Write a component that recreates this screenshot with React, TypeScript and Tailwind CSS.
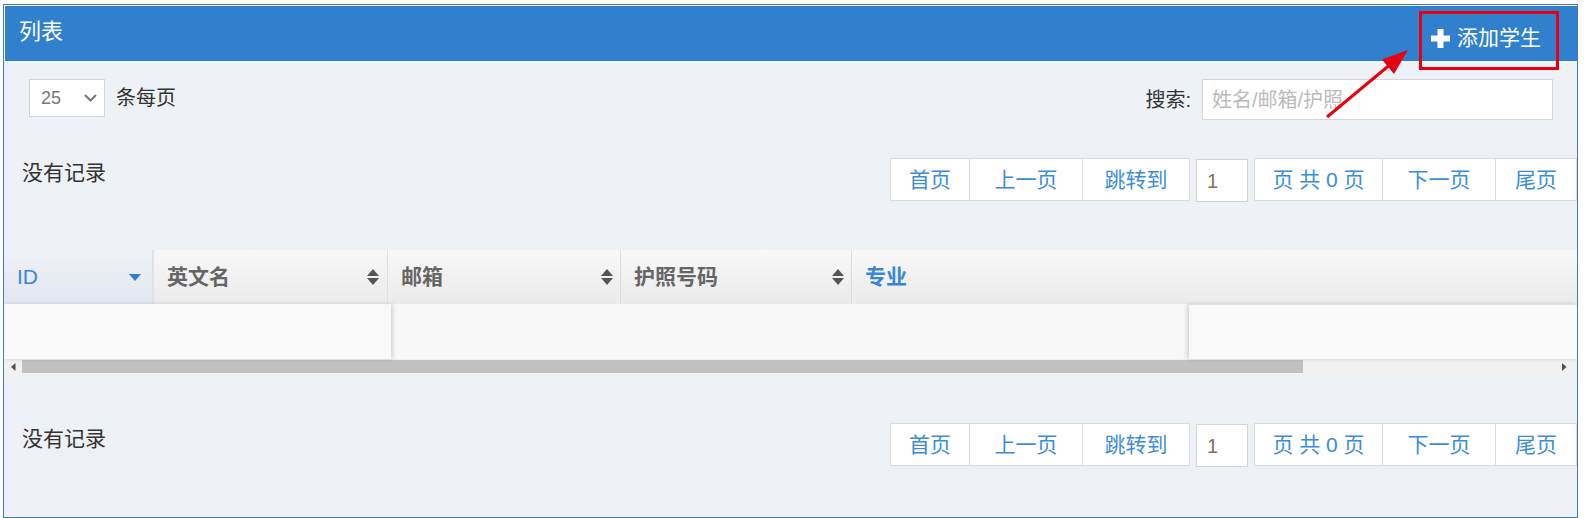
import React from "react";

const FONT = "font-['Liberation_Sans','Noto_Sans_CJK_SC',sans-serif]";

function SortBoth() {
  return (
    <svg width="12" height="16" viewBox="0 0 12 16">
      <path d="M0 7 L6 0 L12 7 Z" fill="#555" />
      <path d="M0 9 L6 16 L12 9 Z" fill="#555" />
    </svg>
  );
}

function Pager() {
  const btn =
    "h-[43px] flex items-center justify-center bg-white border border-[#dcdcdc] text-[21px] text-[#3c8dd6]";
  return (
    <div className="flex items-start">
      <div className="flex">
        <div className={`${btn} w-[80px]`}>首页</div>
        <div className={`${btn} w-[113px] border-l-0`}>上一页</div>
        <div className={`${btn} w-[107px] border-l-0`}>跳转到</div>
      </div>
      <div className="ml-[6px] mt-[1px] h-[43px] w-[52px] bg-white border border-[#d4d4d4] flex items-center pl-[10px] text-[20px] text-[#8a6d5a]">
        1
      </div>
      <div className="ml-[6px] flex">
        <div className={`${btn} w-[129px]`}>页 共 0 页</div>
        <div className={`${btn} w-[113px] border-l-0`}>下一页</div>
        <div className={`${btn} w-[81px] border-l-0`}>尾页</div>
      </div>
    </div>
  );
}

export default function App() {
  return (
    <div className={`relative w-[1594px] h-[518px] bg-white pt-[4px] pl-[3px] ${FONT}`}>
      <div className="w-[1575px] h-[514px] border border-[#3c7dc0] bg-[#eef1f6] flex flex-col overflow-hidden">
        {/* header */}
        <div className="h-[56px] border-t border-l border-white bg-[#3180cd] flex items-start justify-between">
          <div className="pl-[14px] pt-[11px] text-[22px] leading-[30px] text-white">列表</div>
          <div className="flex items-center pt-[17px] pr-[36px]">
            <svg width="19" height="19" viewBox="0 0 19 19">
              <rect x="6.5" y="0" width="6" height="19" fill="#fff" />
              <rect x="0" y="6.5" width="19" height="6" fill="#fff" />
            </svg>
            <span className="ml-[7px] text-[21px] leading-[30px] text-white">添加学生</span>
          </div>
        </div>

        {/* row 1 */}
        <div className="mt-[18px] flex items-start justify-between pl-[25px] pr-[24px]">
          <div className="flex items-center">
            <div className="w-[76px] h-[38px] bg-white border border-[#d6d6d6] flex items-center justify-between pl-[11px] pr-[7px]">
              <span className="text-[18px] text-[#777]">25</span>
              <svg width="13" height="8" viewBox="0 0 13 8">
                <path d="M1 1 L6.5 6.5 L12 1" stroke="#777" strokeWidth="2" fill="none" />
              </svg>
            </div>
            <span className="ml-[11px] text-[20px] text-[#333]">条每页</span>
          </div>
          <div className="flex items-center">
            <span className="text-[20px] text-[#333]">搜索:</span>
            <div className="ml-[11px] w-[351px] h-[41px] bg-white border border-[#d6d6d6] flex items-center pl-[9px] text-[20px] text-[#bbbbbb]">
              姓名/邮箱/护照
            </div>
          </div>
        </div>

        {/* row 2 */}
        <div className="mt-[38px] h-[44px] flex items-start justify-between pl-[18px]">
          <div className="mt-[0px] text-[21px] leading-[30px] text-[#333]">没有记录</div>
          <Pager />
        </div>

        {/* table header */}
        <div className="mt-[48px] h-[54px] flex bg-gradient-to-b from-[#f8f8f8] to-[#ebebeb]">
          <div className="w-[150px] h-full flex items-center justify-between pl-[13px] pr-[11px] bg-gradient-to-b from-[#eff1f7] to-[#e2e6ef] border-r-2 border-[#dfe1e4]">
            <span className="text-[21px] text-[#3a87d4]">ID</span>
            <svg width="12" height="7" viewBox="0 0 12 7">
              <path d="M0 0 L12 0 L6 7 Z" fill="#2f7dd1" />
            </svg>
          </div>
          <div className="w-[234px] h-full flex items-center justify-between pl-[13px] pr-[8px] border-r border-[#e0e0e0]">
            <span className="text-[21px] font-bold text-[#666]">英文名</span>
            <SortBoth />
          </div>
          <div className="w-[233px] h-full flex items-center justify-between pl-[13px] pr-[7px] border-r border-[#dcdcdc]">
            <span className="text-[21px] font-bold text-[#666]">邮箱</span>
            <SortBoth />
          </div>
          <div className="w-[231px] h-full flex items-center justify-between pl-[13px] pr-[7px] border-r border-[#dcdcdc]">
            <span className="text-[21px] font-bold text-[#666]">护照号码</span>
            <SortBoth />
          </div>
          <div className="flex-1 h-full flex items-center pl-[13px]">
            <span className="text-[21px] font-bold text-[#3a87d4]">专业</span>
          </div>
        </div>

        {/* body row */}
        <div className="h-[55px] flex bg-[#f8f8f8]">
          <div className="relative z-10 w-[387px] h-full bg-[#f9f9f9] shadow-[2px_0_4px_rgba(0,0,0,0.15)]" />
          <div className="flex-1 h-full" />
          <div className="relative z-10 w-[388px] h-full bg-[#f9f9f9] shadow-[-2px_0_4px_rgba(0,0,0,0.15)] border-t border-[#e2e2e2]" />
        </div>

        {/* scrollbar */}
        <div className="h-[15px] flex items-center bg-[#f1f1f1]">
          <div className="w-[18px] h-full flex items-center justify-center">
            <svg width="5" height="8" viewBox="0 0 5 8">
              <path d="M4.5 0 L0 4 L4.5 8 Z" fill="#505050" />
            </svg>
          </div>
          <div className="w-[1281px] h-[13px] bg-[#c1c1c1]" />
          <div className="flex-1" />
          <div className="w-[15px] h-full flex items-center justify-start pr-[6px]">
            <svg width="5" height="8" viewBox="0 0 5 8">
              <path d="M0 0 L4.5 4 L0 8 Z" fill="#505050" />
            </svg>
          </div>
        </div>

        {/* bottom row */}
        <div className="mt-[49px] h-[44px] flex items-start justify-between pl-[18px]">
          <div className="mt-[1px] text-[21px] leading-[30px] text-[#333]">没有记录</div>
          <Pager />
        </div>
      </div>

      {/* annotation: red box */}
      <div className="absolute left-[1419px] top-[11px] w-[140px] h-[59px] border-[3px] border-[#e60012]" />
      {/* annotation: arrow */}
      <svg className="absolute left-0 top-0" width="1594" height="518" viewBox="0 0 1594 518">
        <line x1="1327" y1="117" x2="1392" y2="63" stroke="#e60012" strokeWidth="3" />
        <path d="M1408 50 L1382 59.5 L1394 74 Z" fill="#e60012" />
      </svg>
    </div>
  );
}
